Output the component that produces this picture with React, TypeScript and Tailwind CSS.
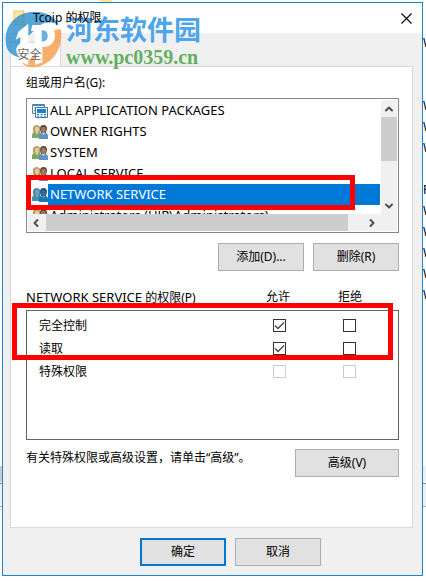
import type { ButtonHTMLAttributes } from "react";
import { clsx } from "clsx";
import { ChevronDown, ChevronLeft, ChevronRight, ChevronUp } from "lucide-react";

const PRINCIPALS = [
    { name: "ALL APPLICATION PACKAGES", kind: "package" },
    { name: "OWNER RIGHTS", kind: "group" },
    { name: "SYSTEM", kind: "group" },
    { name: "LOCAL SERVICE", kind: "group" },
    { name: "NETWORK SERVICE", kind: "group", selected: true },
    { name: "Administrators (HJR\\Administrators)", kind: "group" },
];

const PERMISSIONS = [
    { name: "完全控制", allow: true, deny: false },
    { name: "读取", allow: true, deny: false },
    { name: "特殊权限", allow: false, deny: false, disabled: true },
];

const VALUES = ["W", "", "", "W", "W", "W", "", "F", "W", "W", "W", "W", "W"];

function FolderIcon() {
    return (
        <svg viewBox="0 0 14 17" className="h-[17px] w-[14px]" aria-hidden="true">
            <path d="M1 1h10v14H1z" fill="#fae69e" stroke="#e8c766" />
            <path d="M9 11h3v5H9z" fill="#f3d069" />
        </svg>
    );
}

function GroupIcon({ selected }: { selected?: boolean }) {
    return (
        <svg viewBox="0 0 16 16" className="h-4 w-4 shrink-0" aria-hidden="true">
            <path d="M1 7Q0 1 4.500 1 9 1 8.500 7L8 9H2z" fill={selected ? "#4388a4" : "#b39a5e"} />
            <ellipse cx="5" cy="5.500" rx="2.200" ry="3" fill={selected ? "#6da2b4" : "#e0c8a2"} />
            <path d="M0 14v-3q0-3 4-3h3q2 1 2 3v3z" fill={selected ? "#3e91a6" : "#7fa662"} />
            <path d="M4 8h2v2H4z" fill={selected ? "#70aac0" : "#dfc99c"} />
            <path d="M8 5q0-4 3.500-4T15 5l-1 4H9z" fill={selected ? "#164f86" : "#56443a"} />
            <ellipse cx="11.500" cy="6" rx="2.500" ry="3.200" fill={selected ? "#30699e" : "#a17a5e"} />
            <path d="M7 15v-3q0-3 3-3h3q3 0 3 3v3z" fill={selected ? "#1c75b6" : "#5f93c6"} />
            <path d="m10 9 1.500 2L13 9z" fill={selected ? "#70aac0" : "#d5e3ef"} />
        </svg>
    );
}

function PackageIcon() {
    return (
        <svg viewBox="0 0 16 16" className="h-4 w-4 shrink-0" aria-hidden="true">
            <path d="M.5 1.500h12v9H.5z" fill="#fff" stroke="#5b7f9b" />
            <path d="M1 2.500h11M2 5h2M2 7.500h2" stroke="#2f8fd6" />
            <path d="M3.500 4.500h12v10h-12z" fill="#fff" stroke="#4d7696" />
            <path d="M5 6h9v4H5z" fill="#1583dc" />
            <path d="M5 11.500h2m1.500 0h2m1.500 0h2M5 13.200h2m1.500 0h2m1.500 0h2" stroke="#1583dc" />
        </svg>
    );
}

function CloseIcon() {
    return (
        <svg viewBox="0 0 11 11" className="h-[11px] w-[11px]" aria-hidden="true">
            <path d="m.5.5 10 10m0-10-10 10" stroke="#000" strokeWidth="1.100" />
        </svg>
    );
}

function PushButton({ className, ...props }: ButtonHTMLAttributes<HTMLButtonElement>) {
    return (
        <button
            type="button"
            className={clsx("h-7 border bg-[#e1e1e1] text-center leading-4", className ?? "w-[86px] border-[#adadad]")}
            {...props}
        />
    );
}

function PermissionBox({ label, checked, disabled }: { label: string; checked: boolean; disabled?: boolean }) {
    return (
        <span className="relative block h-[13px] w-[13px]">
            <input
                type="checkbox"
                aria-label={label}
                defaultChecked={checked}
                disabled={disabled}
                className="peer block h-[13px] w-[13px] appearance-none border border-[#333] bg-white disabled:border-[#ccc]"
            />
            <svg
                viewBox="0 0 13 13"
                className="pointer-events-none absolute inset-0 hidden h-[13px] w-[13px] peer-checked:block"
                aria-hidden="true"
            >
                <path d="m2 6.500 3 3 6-6" fill="none" stroke="#444" strokeWidth="1.300" />
            </svg>
        </span>
    );
}

function Watermark() {
    return (
        <div className="pointer-events-none absolute top-2 left-0.5 flex items-start gap-1">
            <svg viewBox="0 0 171 171" className="h-[57px] w-[57px]" aria-hidden="true">
                <path
                    d="M4 104C-8 48 32 2 88 2c40 0 62 18 74 40-26-12-44-8-58 2L44 98c-16 12-12 30 2 42C22 134 8 122 4 104z"
                    fill="#2b8fce"
                    fillOpacity=".8"
                />
                <path
                    d="M168 56c8 58-28 108-82 113-14 0-26-4-36-12 16 0 26-14 38-26l48-62c10-12 22-16 32-13z"
                    fill="#f69a48"
                    fillOpacity=".8"
                />
                <path d="M40 62 70 38v76H46V78l-14 8z" fill="#fff" />
                <path d="M82 42h32c24 0 36 12 36 32s-14 34-38 34v46l-22 8V60H78z" fill="#fff" />
                <path d="M110 58v34c12 0 18-6 18-17s-6-17-18-17z" fill="#2b8fce" fillOpacity=".7" />
                <path d="M58 126h12v36l-12-4z" fill="#fff" />
            </svg>
            <div className="whitespace-nowrap">
                <p className="font-['Noto_Sans_CJK_SC',sans-serif] text-[27px] leading-9 font-bold text-[#4fa5ec]">河东软件园</p>
                <p className="font-['Liberation_Serif',serif] text-xl leading-5 font-bold text-[#61b15c]">www.pc0359.cn</p>
            </div>
        </div>
    );
}

// Explorer window that shows round the edges of the dialog
function Backdrop() {
    return (
        <div className="absolute inset-0 overflow-hidden bg-white" aria-hidden="true">
            <div className="absolute top-0 left-[100px] h-0.5 w-3 bg-[#fae69e]" />
            <div className="absolute top-8 right-0 w-[3px] overflow-hidden leading-[21px]">
                {VALUES.map((value, i) => (
                    <div key={i} className="h-[21px]">{value}</div>
                ))}
            </div>
            <div className="absolute top-[466px] left-0 h-4 w-1 bg-[#cdcdcd]" />
            <div className="absolute top-[466px] right-0 h-4 w-1 bg-[#f0f0f0]" />
            <div className="absolute inset-x-0 top-[483px] h-6 border-y border-t-[#828790] border-b-[#adadad] bg-[#f0f0f0]" />
        </div>
    );
}

export default function App() {
    return (
        <div className="relative pt-0.5 pr-[3px] pb-[5px] pl-0.5 font-['Noto_Sans','Noto_Sans_CJK_SC',sans-serif] text-xs leading-4 text-black">
            <Backdrop />
            <main className="relative border border-[#1883d7] bg-[#f0f0f0] pb-[9px]">
                <header className="flex h-[30px] items-center gap-[6px] bg-white px-2.5">
                    <FolderIcon />
                    <h1 className="relative z-10 flex-1">Tcoip 的权限</h1>
                    <button type="button" aria-label="关闭">
                        <CloseIcon />
                    </button>
                </header>
                <Watermark />

                <div className="pr-[9px] pl-[7px] pt-[9px]">
                    <button type="button" className="block h-6 w-[51px] border border-b-0 border-[#d9d9d9] bg-white pr-3 text-[#666]">
                        <span className="relative z-10">安全</span>
                    </button>
                    <section className="border border-[#d9d9d9] bg-white pt-2 pr-[13px] pb-[50px] pl-[15px]">
                        <h2 className="pb-[7px]">组或用户名(G):</h2>
                        <div className="relative">
                            <div className="border border-[#828790] p-px">
                                <div className="flex h-[114px]">
                                    <ul className="min-w-0 flex-1 overflow-hidden text-[13px]">
                                        {PRINCIPALS.map(({ name, kind, selected }) => (
                                            <li key={name} className="flex h-[21px] items-center pl-1">
                                                {kind === "package" ? <PackageIcon /> : <GroupIcon selected={selected} />}
                                                <span
                                                    className={clsx(
                                                        "flex-1 pl-0.5 leading-[21px] whitespace-nowrap",
                                                        selected && "bg-[#0078d7] text-white",
                                                    )}
                                                >
                                                    {name}
                                                </span>
                                            </li>
                                        ))}
                                    </ul>
                                    <div className="ml-px flex w-4 flex-col items-center bg-[#f0f0f0] text-[#505050]">
                                        <ChevronUp size={12} strokeWidth={4} className="mt-[3px] mb-0.5" />
                                        <div className="h-11 w-full bg-[#cdcdcd]" />
                                        <ChevronDown size={12} strokeWidth={4} className="mt-auto mb-0.5" />
                                    </div>
                                </div>
                                <div className="flex h-[17px] items-center bg-[#f0f0f0] text-[#505050]">
                                    <ChevronLeft size={12} strokeWidth={4} className="mr-1 ml-0.5" />
                                    <div className="h-full flex-1 bg-[#cdcdcd]" />
                                    <ChevronRight size={12} strokeWidth={4} className="mr-[19px] ml-[18px]" />
                                </div>
                            </div>
                            <div className="pointer-events-none absolute top-[77px] right-11 left-0 h-[35px] border-5 border-[#f00]" />
                        </div>

                        <div className="mt-2.5 flex justify-end gap-[9px]">
                            <PushButton>添加(D)...</PushButton>
                            <PushButton>删除(R)</PushButton>
                        </div>

                        <div className="relative mt-[18px]">
                            <table className="w-full table-fixed border-separate border-spacing-0">
                                <thead>
                                    <tr className="h-[21px] align-top">
                                        <th className="p-0 text-left font-normal">
                                            <span className="text-[13px] leading-4">NETWORK SERVICE</span> 的权限(P)
                                        </th>
                                        <th className="w-[70px] p-0 font-normal">允许</th>
                                        <th className="w-[86px] p-0 pr-3 font-normal">拒绝</th>
                                    </tr>
                                </thead>
                            </table>
                            <div className="h-[130px] border border-[#646464] pt-[3px]">
                                <table className="w-full table-fixed border-separate border-spacing-0">
                                    <tbody>
                                        {PERMISSIONS.map(({ name, allow, deny, disabled }) => (
                                            <tr key={name} className="h-[23px]">
                                                <th className="p-0 pl-3 text-left font-normal">{name}</th>
                                                <td className="w-[70px] p-0">
                                                    <PermissionBox label={`${name} 允许`} checked={allow} disabled={disabled} />
                                                </td>
                                                <td className="w-[55px] p-0">
                                                    <PermissionBox label={`${name} 拒绝`} checked={deny} disabled={disabled} />
                                                </td>
                                            </tr>
                                        ))}
                                    </tbody>
                                </table>
                            </div>
                            <div className="pointer-events-none absolute top-3.5 right-1.5 -left-3.5 h-[57px] border-5 border-[#f00]" />
                        </div>

                        <div className="mt-[9px] flex items-start justify-between">
                            <p className="pt-px">有关特殊权限或高级设置，请单击“高级”。</p>
                            <PushButton className="w-[104px] border-[#adadad]">高级(V)</PushButton>
                        </div>
                    </section>
                </div>

                <footer className="mt-2.5 flex justify-center gap-[9px] pl-9">
                    <PushButton className="w-[86px] border-2 border-[#0078d7]">确定</PushButton>
                    <PushButton>取消</PushButton>
                </footer>
            </main>
        </div>
    );
}
